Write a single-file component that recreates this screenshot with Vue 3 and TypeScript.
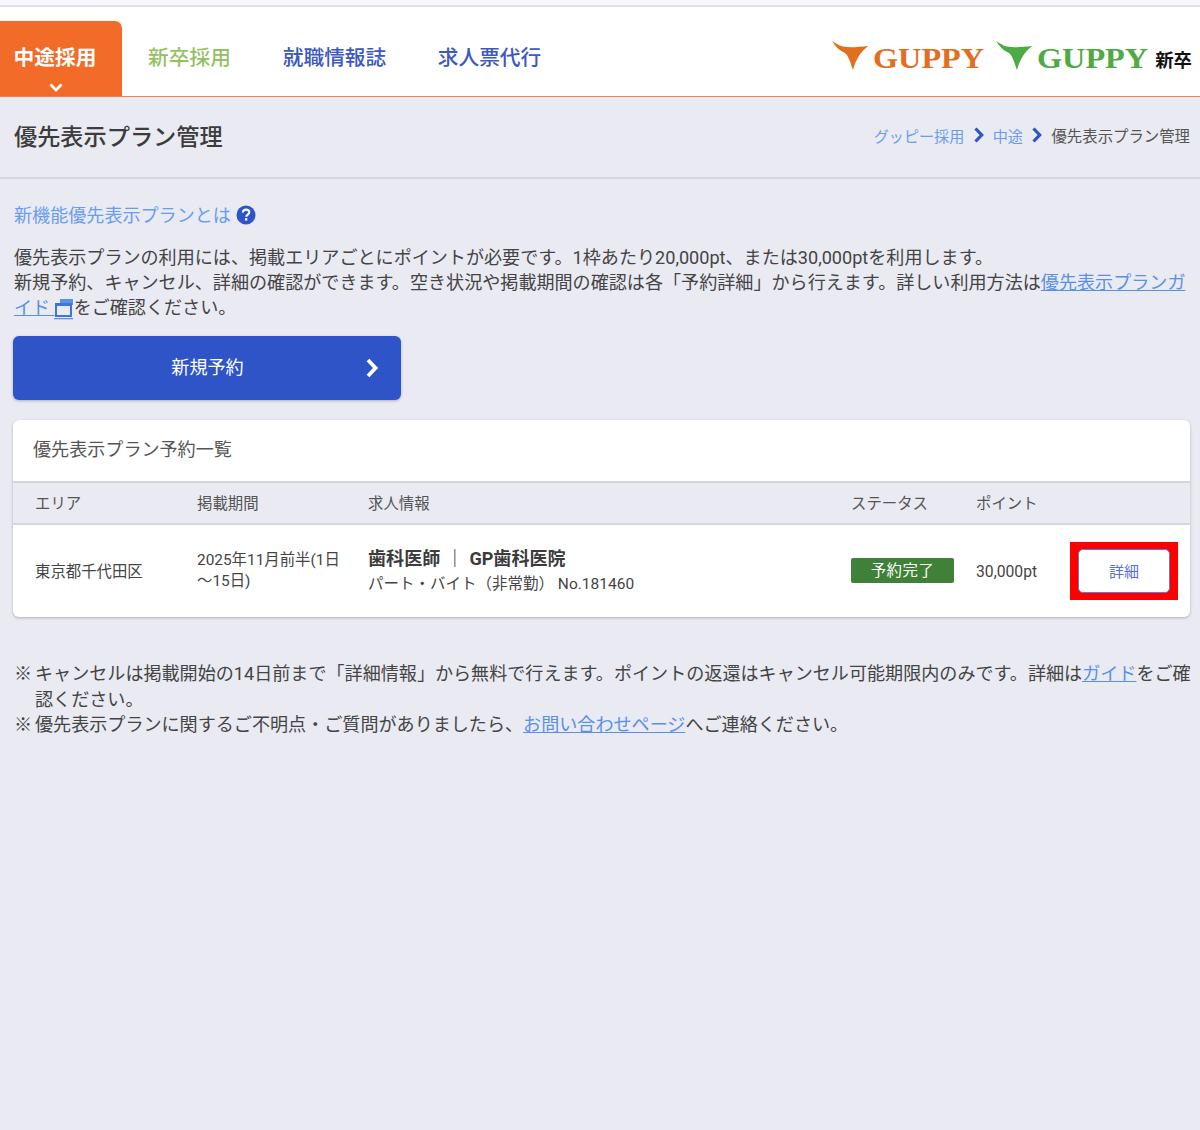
<script setup lang="ts">
const tabs = [
  { label: '新卒採用', cls: 'green' },
  { label: '就職情報誌', cls: 'blue' },
  { label: '求人票代行', cls: 'blue' },
]
const headers = ['エリア', '掲載期間', '求人情報', 'ステータス', 'ポイント', '']
</script>

<template>
  <div class="page">
    <div class="topstrip"></div>
    <header class="header">
      <nav class="tabs">
        <a class="tab active">
          <span>中途採用</span>
          <svg class="tabchev" width="14" height="10" viewBox="0 0 14 10"><path d="M1.5 1.5l5.5 5.5 5.5-5.5" fill="none" stroke="#fff" stroke-width="2.8" /></svg>
        </a>
        <a v-for="t in tabs" :key="t.label" class="tab" :class="t.cls">{{ t.label }}</a>
      </nav>
      <div class="logos">
        <div class="logo orange">
          <svg width="37" height="30" viewBox="0 0 37 30"><path d="M0 0C4 2 7 5 11 5.5C18 7 26 6 36.5 5C29 10 24 18 21 29C19 24 17 15 13 12C8 10 3 5 0 0Z" fill="currentColor" /></svg>
          <span>GUPPY</span>
        </div>
        <div class="logo lgreen">
          <svg width="37" height="30" viewBox="0 0 37 30"><path d="M0 0C4 2 7 5 11 5.5C18 7 26 6 36.5 5C29 10 24 18 21 29C19 24 17 15 13 12C8 10 3 5 0 0Z" fill="currentColor" /></svg>
          <span>GUPPY</span>
        </div>
        <b class="shinsotsu">新卒</b>
      </div>
    </header>

    <section class="titlebar">
      <h1>優先表示プラン管理</h1>
      <div class="crumbs">
        <a>グッピー採用</a>
        <svg width="12" height="16" viewBox="0 0 12 16"><path d="M2.5 1.5l6.2 6.5-6.2 6.5" fill="none" stroke="#2d55c8" stroke-width="3.2" /></svg>
        <a>中途</a>
        <svg width="12" height="16" viewBox="0 0 12 16"><path d="M2.5 1.5l6.2 6.5-6.2 6.5" fill="none" stroke="#2d55c8" stroke-width="3.2" /></svg>
        <span>優先表示プラン管理</span>
      </div>
    </section>

    <main class="main">
      <div class="help">
        <a>新機能優先表示プランとは</a>
        <svg width="20" height="20" viewBox="0 0 20 20">
          <circle cx="10" cy="10" r="9.5" fill="#2d55c8" />
          <path d="M6.8 7.6c0-1.9 1.4-3 3.3-3s3.2 1.1 3.2 2.7c0 2.4-3 2.3-3 4.4" fill="none" stroke="#fff" stroke-width="2.1" />
          <rect x="9" y="13.2" width="2.3" height="2.3" fill="#fff" />
        </svg>
      </div>
      <p class="desc">
        優先表示プランの利用には、掲載エリアごとにポイントが必要です。1枠あたり20,000pt、または30,000ptを利用します。<br />
        新規予約、キャンセル、詳細の確認ができます。空き状況や掲載期間の確認は各「予約詳細」から行えます。詳しい利用方法は<a class="ul">優先表示プランガイド&nbsp;</a><svg class="ext" width="20" height="22" viewBox="0 0 20 22"><rect x="0" y="20" width="19" height="1.3" fill="#5a90e8" /><rect x="6" y="1" width="13" height="6" fill="#5b93ea" /><rect x="2" y="6" width="15" height="12" fill="#e9eaf2" stroke="#3f74d8" stroke-width="2" /><rect x="1" y="5" width="17" height="3" fill="#3f74d8" /></svg>をご確認ください。
      </p>
      <a class="newbtn">
        <span>新規予約</span>
        <svg class="newchev" width="16" height="22" viewBox="0 0 16 22"><path d="M3 3l7.5 8-7.5 8" fill="none" stroke="#fff" stroke-width="3.8" /></svg>
      </a>

      <section class="card">
        <h2>優先表示プラン予約一覧</h2>
        <div class="grid head">
          <div v-for="h in headers" :key="h">{{ h }}</div>
        </div>
        <div class="grid row">
          <div class="area">東京都千代田区</div>
          <div class="period">2025年11月前半(1日<br />～15日)</div>
          <div>
            <div class="jobtitle">歯科医師 ｜ GP歯科医院</div>
            <div class="jobsub">パート・バイト（非常勤） No.181460</div>
          </div>
          <div><span class="badge">予約完了</span></div>
          <div class="pt">30,000pt</div>
          <div class="frame"><a class="detail">詳細</a></div>
        </div>
      </section>

      <ul class="notes">
        <li><span class="mark">※</span><span>キャンセルは掲載開始の14日前まで「詳細情報」から無料で行えます。ポイントの返還はキャンセル可能期限内のみです。詳細は<a class="ul">ガイド</a>をご確認ください。</span></li>
        <li><span class="mark">※</span><span>優先表示プランに関するご不明点・ご質問がありましたら、<a class="ul">お問い合わせページ</a>へご連絡ください。</span></li>
      </ul>
    </main>
  </div>
</template>

<style>
html, body { margin: 0; background: #e9eaf2; }
</style>

<style scoped>
.page {
  min-height: 1130px;
  background: #e9eaf2;
  color: #444;
  font-family: Roboto, "Noto Sans CJK JP", sans-serif;
  font-size: 18.08px;
  box-sizing: border-box;
}
.topstrip {
  height: 5px;
  background: #f8f8fc;
  border-bottom: 2px solid #dfe1ec;
}
.header {
  height: 89px;
  background: #fff;
  border-bottom: 1px solid #f3834b;
  display: flex;
  justify-content: space-between;
  align-items: flex-end;
}
.tabs { display: flex; height: 75px; }
.tab {
  width: 136px;
  padding-top: 22px;
  box-sizing: border-box;
  text-align: center;
  font-size: 20.7px;
  font-weight: 500;
  line-height: 30px;
  white-space: nowrap;
}
.tab.active {
  width: 122px;
  background: #f26b28;
  color: #fff;
  border-radius: 0 7px 0 0;
  display: flex;
  flex-direction: column;
  align-items: center;
  padding-right: 12px;
  font-weight: 700;
}
.tabchev { margin-top: 10px; margin-left: 2px; }
.tab.green { color: #96c05f; width: 135px; }
.tab.blue { color: #3d57c4; width: 155px; }
.logos {
  display: flex;
  align-items: center;
  height: 88px;
  padding-right: 8px;
  padding-top: 11px;
  box-sizing: border-box;
}
.logo {
  display: flex;
  align-items: flex-start;
  font-family: "Liberation Serif", serif;
  font-weight: 700;
  font-size: 30px;
  line-height: 30px;
}
.logo svg { margin-top: -1px; margin-right: 4px; }
.logo span {
  margin-top: 1px;
  margin-right: 8px;
  transform: scaleX(1.075);
  transform-origin: left center;
}
.orange { color: #e0701f; margin-right: 12px; }
.lgreen { color: #4eaa42; }
.shinsotsu {
  font-family: "Noto Sans CJK JP", sans-serif;
  font-size: 18.4px;
  color: #111;
  margin-left: 7px;
  margin-top: 2px;
}
.titlebar {
  height: 75px;
  padding: 0 10px 5px 14px;
  border-bottom: 2px solid #d3d4de;
  box-sizing: content-box;
  display: flex;
  align-items: center;
  justify-content: space-between;
}
h1 {
  margin: 0;
  font-size: 23.2px;
  font-weight: 500;
  color: #3c3c3c;
}
.crumbs {
  display: flex;
  align-items: center;
  font-size: 15.4px;
  color: #555;
  white-space: nowrap;
}
.crumbs a { color: #6a9cf0; font-size: 15.1px; }
.crumbs svg { margin: 0 8px 0 8.5px; }
.main { padding: 25px 10px 0 13px; }
.help {
  display: flex;
  align-items: center;
  gap: 5px;
  height: 24px;
  padding-left: 1px;
  color: #6a9cf0;
  line-height: 24px;
}
.help svg { margin-top: -2px; }
.desc {
  margin: 17px 0 0;
  padding-left: 1px;
  line-height: 25.2px;
  color: #444;
}
.ul { color: #5a90e8; text-decoration: underline; }
.ext { vertical-align: -6px; margin-left: -1px; }
.newbtn {
  margin-top: 15px;
  width: 388px;
  height: 64px;
  background: #2f54c8;
  border-radius: 6px;
  box-shadow: 0 1px 3px rgba(0, 0, 0, 0.25);
  color: #fff;
  display: flex;
  align-items: center;
  justify-content: center;
  position: relative;
}
.newbtn span { margin: -3px 0 0 1px; }
.newchev { position: absolute; right: 20px; top: 21px; }
.card {
  margin-top: 20px;
  width: 1177px;
  background: #fff;
  border-radius: 6px;
  box-shadow: 0 1px 3px rgba(0, 0, 0, 0.25);
}
h2 {
  margin: 0;
  height: 61px;
  padding-left: 20px;
  font-size: 18.08px;
  font-weight: 400;
  line-height: 59px;
  color: #555;
  box-sizing: border-box;
}
.grid {
  display: grid;
  grid-template-columns: 162px 171px 483px 125px 94px 108px;
  padding-left: 22px;
  align-items: center;
}
.head {
  height: 44px;
  padding-bottom: 2px;
  background: #e9eaf2;
  border-top: 2px solid #d3d4de;
  border-bottom: 2px solid #d3d4de;
  box-sizing: border-box;
  font-size: 15.4px;
  color: #555;
}
.row {
  height: 92px;
  font-size: 15.4px;
  color: #444;
}
.area { margin-top: -2px; }
.period { line-height: 21.5px; margin-top: 1px; }
.jobtitle { font-size: 18.08px; font-weight: 700; color: #3c3c3c; line-height: 26px; white-space: nowrap; word-spacing: 1px; }
.jobsub { font-size: 15.5px; line-height: 24px; white-space: nowrap; }
.badge {
  display: block;
  width: 103px;
  height: 25px;
  line-height: 26px;
  background: #3f8138;
  color: #fff;
  border-radius: 2px;
  text-align: center;
  font-size: 15.4px;
  letter-spacing: 0.5px;
}
.pt { font-size: 15.7px; margin-top: 2px; }
.frame {
  box-sizing: border-box;
  width: 108px;
  height: 58px;
  padding: 7px 8px;
  background: #fd0000;
}
.detail {
  box-sizing: border-box;
  height: 44px;
  display: flex;
  align-items: center;
  justify-content: center;
  border: 1px solid #5a7ddc;
  border-radius: 5px;
  background: #fff;
  color: #5b6fd0;
  font-size: 15px;
}
.notes {
  list-style: none;
  margin: 44.4px 0 0;
  padding: 0 0 0 1px;
  line-height: 25.6px;
  width: 1180px;
}
.notes li { display: flex; }
.mark { flex: 0 0 21px; width: 21px; }
</style>
